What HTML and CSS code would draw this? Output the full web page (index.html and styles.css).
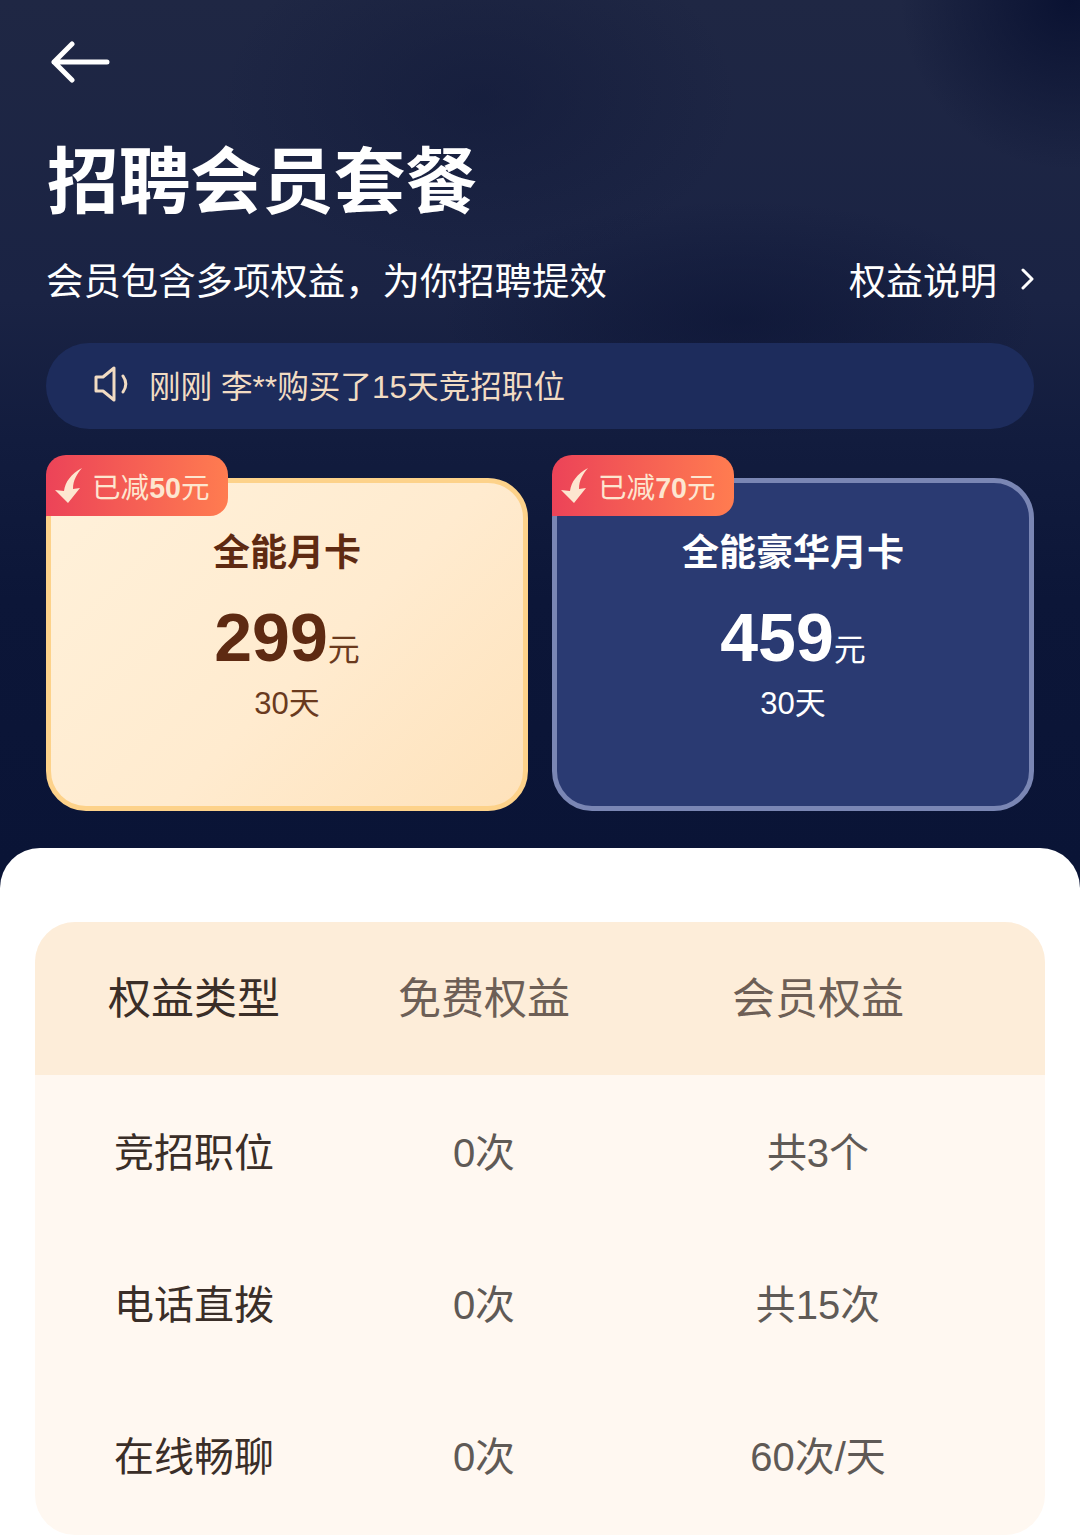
FILE: index.html
```html
<!DOCTYPE html>
<html lang="zh-CN">
<head>
    <meta charset="UTF-8">
    <meta name="viewport" content="width=device-width, initial-scale=1.0">
    <title>招聘会员套餐</title>
    <link rel="stylesheet" href="styles.css">
</head>
<body>
    <div class="page">
        <header class="hero">
            <svg class="back-icon" width="60" height="42" viewBox="0 0 60 42" fill="none">
                <path d="M21 3 L3 21 L21 39 M3 21 H56" stroke="#fff" stroke-width="5" stroke-linecap="round" stroke-linejoin="round"/>
            </svg>
            <h1>招聘会员套餐</h1>
            <div class="sub-row">
                <p class="sub-text">会员包含多项权益，为你招聘提效</p>
                <a href="#" class="rights-link">权益说明
                    <svg width="13" height="22" viewBox="0 0 13 22" fill="none">
                        <path d="M2 2 L11 11 L2 20" stroke="#fff" stroke-width="3" stroke-linecap="round" stroke-linejoin="round"/>
                    </svg>
                </a>
            </div>
            <div class="notice">
                <svg class="notice-icon" width="36" height="36" viewBox="0 0 36 36" fill="none">
                    <path d="M2 11 H9 L20 2 V34 L9 25 H2 Z" stroke="#f2dcc3" stroke-width="3" stroke-linejoin="round"/>
                    <path d="M29 10 C32.5 15 32.5 21 29 26" stroke="#f2dcc3" stroke-width="3" stroke-linecap="round"/>
                </svg>
                <span>刚刚 李**购买了15天竞招职位</span>
            </div>
            <div class="cards">
                <div class="card card-gold">
                    <div class="badge">
                        <svg class="badge-icon" width="28" height="36" viewBox="0 0 28 36">
                            <path d="M27 0 C16 6 10 14 9 23 L0 22 L13 35 L25 20 L18 21 C18 12 22 6 27 0 Z" fill="#fde6d0"/>
                        </svg>
                        <span>已减<b>50</b>元</span>
                    </div>
                    <h2>全能月卡</h2>
                    <div class="price"><b>299</b><span>元</span></div>
                    <div class="days">30天</div>
                </div>
                <div class="card card-blue">
                    <div class="badge">
                        <svg class="badge-icon" width="28" height="36" viewBox="0 0 28 36">
                            <path d="M27 0 C16 6 10 14 9 23 L0 22 L13 35 L25 20 L18 21 C18 12 22 6 27 0 Z" fill="#fde6d0"/>
                        </svg>
                        <span>已减<b>70</b>元</span>
                    </div>
                    <h2>全能豪华月卡</h2>
                    <div class="price"><b>459</b><span>元</span></div>
                    <div class="days">30天</div>
                </div>
            </div>
        </header>

        <section class="sheet">
            <div class="table">
                <div class="row row-head">
                    <div>权益类型</div>
                    <div class="muted">免费权益</div>
                    <div class="muted">会员权益</div>
                </div>
                <div class="row">
                    <div>竞招职位</div>
                    <div class="muted">0次</div>
                    <div class="muted">共3个</div>
                </div>
                <div class="row">
                    <div>电话直拨</div>
                    <div class="muted">0次</div>
                    <div class="muted">共15次</div>
                </div>
                <div class="row">
                    <div>在线畅聊</div>
                    <div class="muted">0次</div>
                    <div class="muted">60次/天</div>
                </div>
            </div>
        </section>
    </div>
</body>
</html>
```

FILE: styles.css
```css
* {
    margin: 0;
    padding: 0;
    box-sizing: border-box;
    font-family: "Liberation Sans", "Noto Sans CJK SC", sans-serif;
}

body {
    background: #0a1435;
}

.page {
    width: 1080px;
    height: 1536px;
    overflow: hidden;
    background:
        radial-gradient(circle at 1070px 0, #0a1232 0, rgba(10, 18, 50, 0) 170px),
        radial-gradient(ellipse 300px 120px at 740px 320px, rgba(10, 18, 50, 0.55) 0, rgba(10, 18, 50, 0) 100%),
        radial-gradient(ellipse 260px 170px at 480px 100px, rgba(14, 22, 54, 0.45) 0, rgba(14, 22, 54, 0) 100%),
        linear-gradient(180deg, #1f2744 0%, #1a2344 300px, #121c3e 440px, #0c1638 600px, #0a1436 860px);
}

.hero {
    height: 848px;
    padding: 41px 46px 0;
}

.back-icon {
    display: block;
    margin-left: 5px;
}

h1 {
    margin-top: 56px;
    margin-left: 1px;
    font-size: 71.7px;
    line-height: 86px;
    font-weight: 700;
    color: #fff;
}

.sub-row {
    display: flex;
    justify-content: space-between;
    align-items: center;
    margin-top: 31px;
    height: 46px;
    font-size: 37.4px;
    color: #fff;
}

.rights-link {
    display: flex;
    align-items: center;
    gap: 24px;
    font-size: 37px;
    color: #fff;
    text-decoration: none;
}

.notice {
    display: flex;
    align-items: center;
    gap: 19px;
    height: 86px;
    margin-top: 41px;
    padding: 0 0 4px 48px;
    border-radius: 43px;
    background: #1d2c5c;
    font-size: 31.6px;
    color: #f2dcc3;
}

.cards {
    display: flex;
    gap: 24px;
    margin-top: 49px;
}

.card {
    position: relative;
    flex: 1;
    height: 333px;
    border: 5px solid;
    border-radius: 40px;
    text-align: center;
}

.card-gold {
    border-color: #fdd28a;
    background: linear-gradient(135deg, #fff1da 0%, #ffebcf 55%, #fee2bb 100%);
    color: #5e2a12;
}

.card-blue {
    border-color: #7a86b4;
    background: #2a3a72;
    color: #fff;
}

.badge {
    position: absolute;
    top: -28px;
    left: -5px;
    display: flex;
    align-items: center;
    gap: 9px;
    height: 61px;
    padding: 0 18px 0 9px;
    border-radius: 20px 20px 18px 0;
    background: linear-gradient(90deg, #ec4358 0%, #ff7c50 100%);
    font-size: 28.6px;
    color: #fde6d0;
}

.badge b {
    font-weight: 700;
}

.badge-icon {
    flex: none;
}

h2 {
    margin-top: 48px;
    font-size: 37px;
    line-height: 46px;
    font-weight: 700;
}

.price {
    margin-top: 22px;
    height: 76px;
    line-height: 76px;
    font-size: 32px;
}

.price b {
    font-size: 68px;
    font-weight: 700;
}

.days {
    margin-top: 9px;
    font-size: 31px;
    line-height: 40px;
}

.card-gold .days,
.card-gold .price span {
    color: #6a3a1e;
}

.sheet {
    height: 688px;
    padding: 74px 35px 0;
    border-radius: 40px 40px 0 0;
    background: #fff;
}

.table {
    height: 613px;
    border-radius: 40px;
    overflow: hidden;
    background: #fff8f1;
}

.row {
    display: grid;
    grid-template-columns: 318px 262px 406px;
    align-items: center;
    height: 152px;
    padding-bottom: 2px;
    text-align: center;
    font-size: 40px;
    color: #3a2e28;
}

.row-head {
    height: 153px;
    padding-bottom: 7px;
    background: #fdedd9;
    font-size: 43px;
}

.muted {
    color: #5f5a56;
}

.row-head .muted {
    color: #6d5f56;
}
```
